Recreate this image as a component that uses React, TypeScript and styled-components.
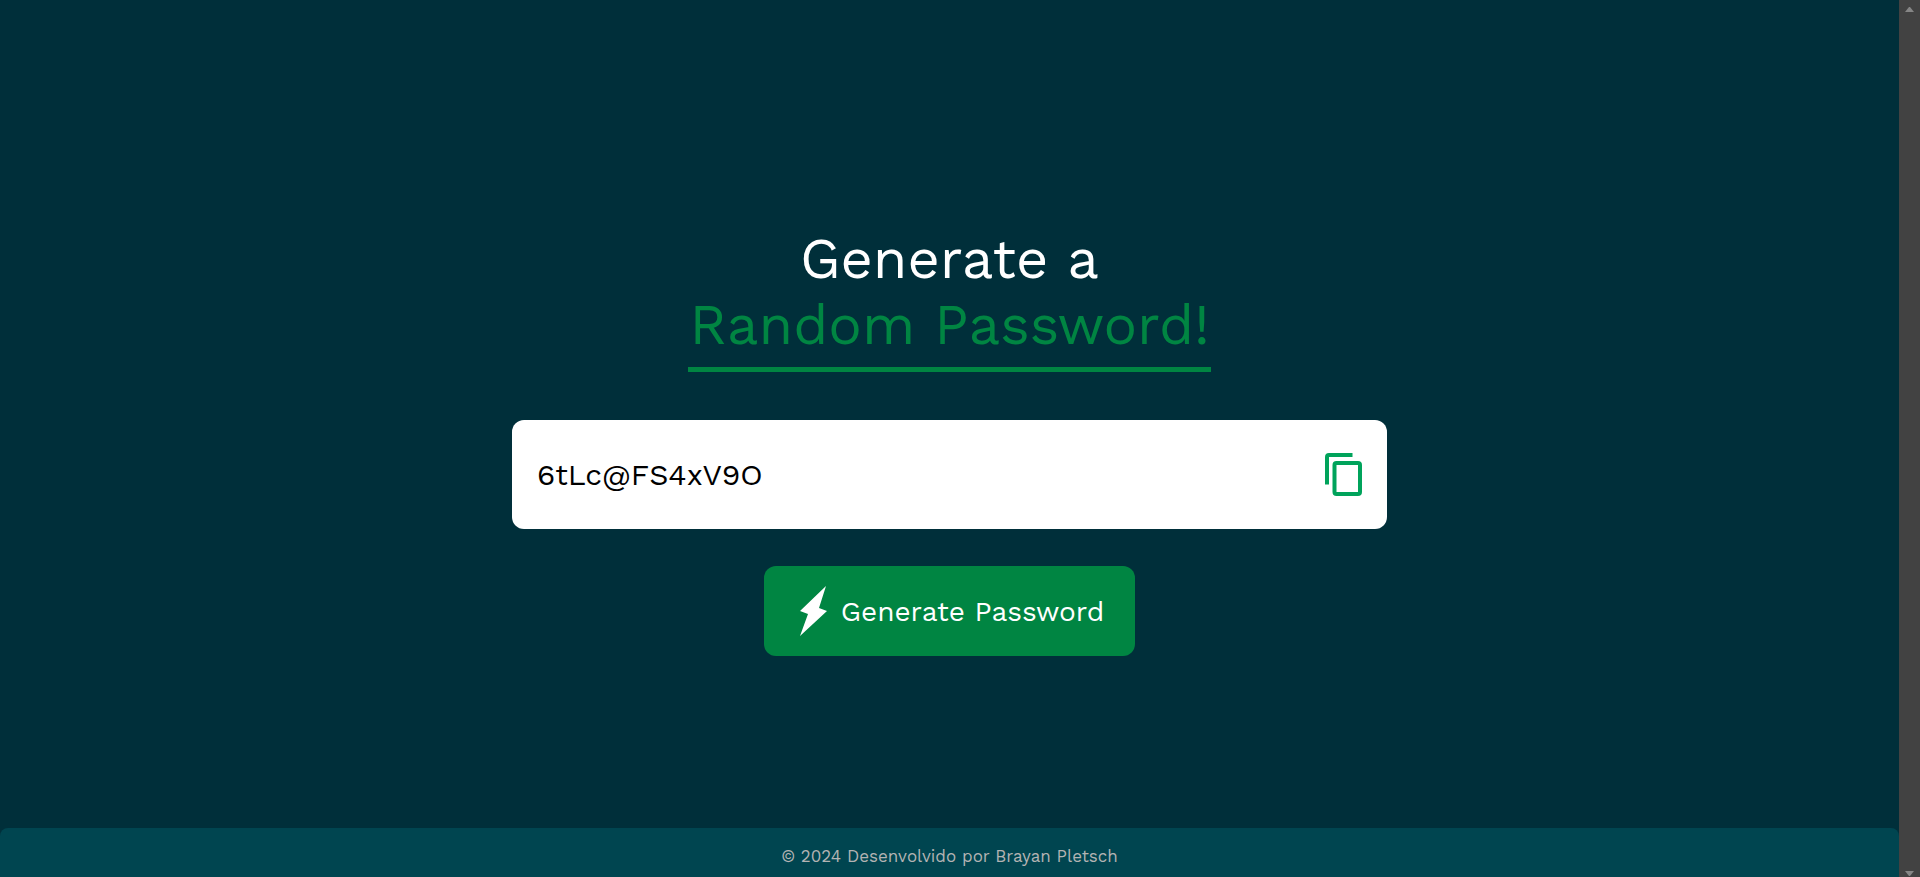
import React, { useState } from "react";
import styled, { createGlobalStyle } from "styled-components";

const GlobalStyle = createGlobalStyle`
  * { box-sizing: border-box; margin: 0; padding: 0; }
  body {
    background: #002f3a;
    font-family: "Work Sans", Inter, "Liberation Sans", sans-serif;
  }
`;

const Page = styled.div`
  display: flex;
  min-height: 100vh;
`;

const Content = styled.div`
  flex: 1;
  min-width: 0;
  display: flex;
  flex-direction: column;
`;

const Main = styled.main`
  flex: 1;
  display: flex;
  flex-direction: column;
  align-items: center;
  justify-content: center;
  padding: 54px 16px 0;
`;

const Title = styled.h1`
  display: flex;
  flex-direction: column;
  align-items: center;
  color: #ffffff;
  font-size: 56px;
  font-weight: 400;
  line-height: 66px;
  white-space: nowrap;
`;

const Highlight = styled.span`
  padding: 0 2px 9px;
  border-bottom: 5px solid #008542;
  color: #008542;
`;

const PasswordBox = styled.div`
  display: flex;
  align-items: center;
  width: 100%;
  max-width: 875px;
  height: 109px;
  margin: 48px 0 37px;
  padding: 0 24px 0 25px;
  border-radius: 12px;
  background: #ffffff;
`;

const PasswordInput = styled.input`
  flex: 1;
  min-width: 0;
  border: 0;
  outline: 0;
  background: transparent;
  color: #000000;
  font-family: inherit;
  font-size: 30px;
  font-weight: 400;
`;

const CopyButton = styled.button`
  display: flex;
  border: 0;
  background: transparent;
  color: #00a35b;
  cursor: pointer;
`;

const GenerateButton = styled.button`
  display: flex;
  align-items: center;
  justify-content: center;
  gap: 14px;
  width: 371px;
  height: 90px;
  padding-left: 5px;
  border: 0;
  border-radius: 12px;
  background: #008542;
  color: #ffffff;
  font-family: inherit;
  font-size: 28px;
  font-weight: 400;
  white-space: nowrap;
  cursor: pointer;
`;

const Footer = styled.footer`
  display: flex;
  align-items: center;
  justify-content: center;
  height: 49px;
  padding-top: 7px;
  border-radius: 8px 8px 0 0;
  background: #004550;
  color: #b3b3b3;
  font-size: 17px;
`;

const ScrollTrack = styled.div`
  display: flex;
  flex-direction: column;
  align-items: center;
  justify-content: space-between;
  width: 21px;
  padding: 7px 0 1px;
  background: #424242;
  color: #868686;
`;

const CHARS = "ABCDEFGHIJKLMNOPQRSTUVWXYZabcdefghijklmnopqrstuvwxyz0123456789@#$%&";

function randomPassword(length: number): string {
  return Array.from({ length }, () => CHARS[Math.floor(Math.random() * CHARS.length)]).join("");
}

const CopyIcon = () => (
  <svg width="38" height="44" viewBox="0 0 38 44" fill="none" stroke="currentColor" strokeWidth="4" aria-hidden="true">
    <path d="M2 31.500V4a2 2 0 0 1 2-2h23.500" />
    <rect x="9.500" y="10" width="25.500" height="31" rx="2" />
  </svg>
);

const BoltIcon = () => (
  <svg width="27" height="50" viewBox="0 0 27 50" fill="currentColor" aria-hidden="true">
    <path d="M26 0 0 25l8 3L0 50l27-25-8-3z" />
  </svg>
);

const Arrow = ({ up = false }: { up?: boolean }) => (
  <svg width="9" height="5" viewBox="0 0 9 5" fill="currentColor" aria-hidden="true">
    <path d={up ? "M0 5 4 0h1l4 5z" : "M0 0h9L5 5H4z"} />
  </svg>
);

export default function App() {
  const [password, setPassword] = useState("6tLc@FS4xV9O");
  return (
    <Page>
      <GlobalStyle />
      <Content>
        <Main>
          <Title>
            <span>Generate a</span>
            <Highlight>Random Password!</Highlight>
          </Title>
          <PasswordBox>
            <PasswordInput type="text" readOnly value={password} aria-label="Password" />
            <CopyButton type="button" aria-label="Copy" onClick={() => navigator.clipboard?.writeText(password)}>
              <CopyIcon />
            </CopyButton>
          </PasswordBox>
          <GenerateButton type="button" onClick={() => setPassword(randomPassword(12))}>
            <BoltIcon />
            Generate Password
          </GenerateButton>
        </Main>
        <Footer>© 2024 Desenvolvido por Brayan Pletsch</Footer>
      </Content>
      <ScrollTrack>
        <Arrow up />
        <Arrow />
      </ScrollTrack>
    </Page>
  );
}
